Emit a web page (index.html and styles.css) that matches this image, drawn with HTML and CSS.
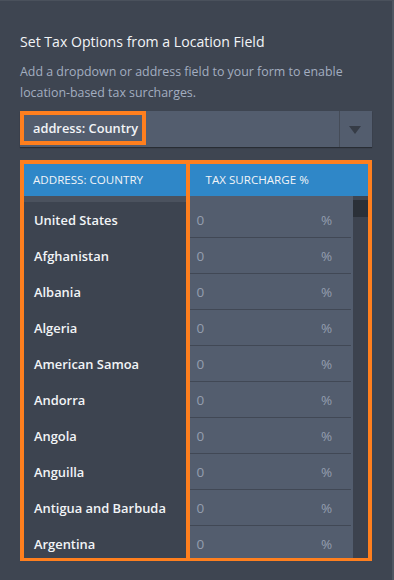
FILE: index.html
```html
<!DOCTYPE html>
<html lang="en">
<head>
    <meta charset="UTF-8">
    <meta name="viewport" content="width=device-width, initial-scale=1.0">
    <title>Tax Options</title>
    <link rel="stylesheet" href="styles.css">
</head>
<body>

    <div class="panel">
        <h3 class="panel-title">Set Tax Options from a Location Field</h3>
        <p class="panel-desc">Add a dropdown or address field to your form to enable location-based tax surcharges.</p>

        <div class="select-box">
            <span class="select-value">address: Country</span>
            <span class="select-arrow"></span>
        </div>

        <div class="tax-table">
            <div class="col col-country">
                <div class="col-head">ADDRESS: COUNTRY</div>
                <div class="country-list">
                    <div class="country">United States</div>
                    <div class="country">Afghanistan</div>
                    <div class="country">Albania</div>
                    <div class="country">Algeria</div>
                    <div class="country">American Samoa</div>
                    <div class="country">Andorra</div>
                    <div class="country">Angola</div>
                    <div class="country">Anguilla</div>
                    <div class="country">Antigua and Barbuda</div>
                    <div class="country">Argentina</div>
                </div>
            </div>
            <div class="col col-tax">
                <div class="col-head">TAX SURCHARGE %</div>
                <div class="tax-body">
                    <div class="tax-list">
                        <div class="tax-row"><span>0</span><span>%</span></div>
                        <div class="tax-row"><span>0</span><span>%</span></div>
                        <div class="tax-row"><span>0</span><span>%</span></div>
                        <div class="tax-row"><span>0</span><span>%</span></div>
                        <div class="tax-row"><span>0</span><span>%</span></div>
                        <div class="tax-row"><span>0</span><span>%</span></div>
                        <div class="tax-row"><span>0</span><span>%</span></div>
                        <div class="tax-row"><span>0</span><span>%</span></div>
                        <div class="tax-row"><span>0</span><span>%</span></div>
                        <div class="tax-row"><span>0</span><span>%</span></div>
                    </div>
                    <div class="scrollbar"><div class="thumb"></div></div>
                </div>
            </div>
        </div>
    </div>

</body>
</html>
```

FILE: styles.css
```css
:root {
    --page-bg: #3e4551;
    --field-bg: #535d6e;
    --row-dark: #3d4450;
    --head-blue: #2f87c8;
    --highlight: #ff7f1e;
    --text-light: #f2f4f7;
    --text-muted: #a3aec0;
    --value-color: #949eae;
    --font-family: "Open Sans", "Noto Sans", Arial, sans-serif;
}
body, html {
    margin: 0;
    height: 100%;
    background-color: var(--page-bg);
    font-family: var(--font-family);
}
body {
    border-top: 1px solid #4a515c;
    border-right: 2px solid #4f5661;
    box-sizing: border-box;
}
.panel {
    padding: 31px 20px 0 20px;
}
.panel-title {
    margin: 0;
    font-size: 14.1px;
    line-height: 20px;
    font-weight: 400;
    color: var(--text-light);
}
.panel-desc {
    margin: 9px 0 0 0;
    font-size: 12.4px;
    line-height: 21px;
    color: var(--text-muted);
}

/* --- SELECT --- */
.select-box {
    display: flex;
    align-items: flex-start;
    height: 36px;
    width: 352px;
    margin-top: 8px;
    background-color: var(--field-bg);
    box-shadow: 0 1px 1px rgba(0, 0, 0, 0.35);
}
.select-value {
    box-sizing: border-box;
    height: 34px;
    width: 126px;
    padding: 0 0 0 9px;
    border: 4px solid var(--highlight);
    color: var(--text-light);
    font-size: 12.8px;
    font-weight: 600;
    line-height: 26px;
    white-space: nowrap;
}
.select-arrow {
    position: relative;
    margin-left: auto;
    width: 32px;
    height: 36px;
    border-left: 1px solid #454c58;
}
.select-arrow::after {
    content: "";
    position: absolute;
    left: 9px;
    top: 15px;
    border-left: 6px solid transparent;
    border-right: 6px solid transparent;
    border-top: 8px solid #363c46;
}

/* --- TABLE --- */
.tax-table {
    display: flex;
    margin-top: 13px;
    height: 401px;
}
.col {
    box-sizing: border-box;
    height: 100%;
    border: 4px solid var(--highlight);
    border-bottom-width: 3px;
    overflow: hidden;
    display: flex;
    flex-direction: column;
}
.col-country {
    width: 170px;
}
.col-tax {
    width: 187px;
    margin-left: -4px;
}
.col-head {
    flex: none;
    height: 32px;
    line-height: 32px;
    background-color: var(--head-blue);
    color: var(--text-light);
    font-size: 11.6px;
    padding-left: 9px;
}
.col-tax .col-head {
    padding-left: 16px;
}
.country-list {
    flex: 1;
    border-top: 6px solid #4b525e;
    background-color: var(--row-dark);
}
.country {
    height: 36px;
    line-height: 37px;
    padding-left: 10px;
    color: var(--text-light);
    font-size: 12.9px;
    font-weight: 600;
    white-space: nowrap;
}
.tax-body {
    flex: 1;
    display: flex;
}
.tax-list {
    width: 164px;
    padding-top: 6px;
    background-color: var(--field-bg);
}
.tax-row {
    display: flex;
    justify-content: space-between;
    height: 35px;
    line-height: 37px;
    margin-right: 2px;
    padding: 0 19px 0 7px;
    border-bottom: 1px solid #414855;
    color: var(--value-color);
    font-size: 13.5px;
}
.scrollbar {
    width: 15px;
    margin-top: 4px;
    background-color: #3c424e;
}
.thumb {
    height: 17px;
    background-color: #2b3038;
}
```
